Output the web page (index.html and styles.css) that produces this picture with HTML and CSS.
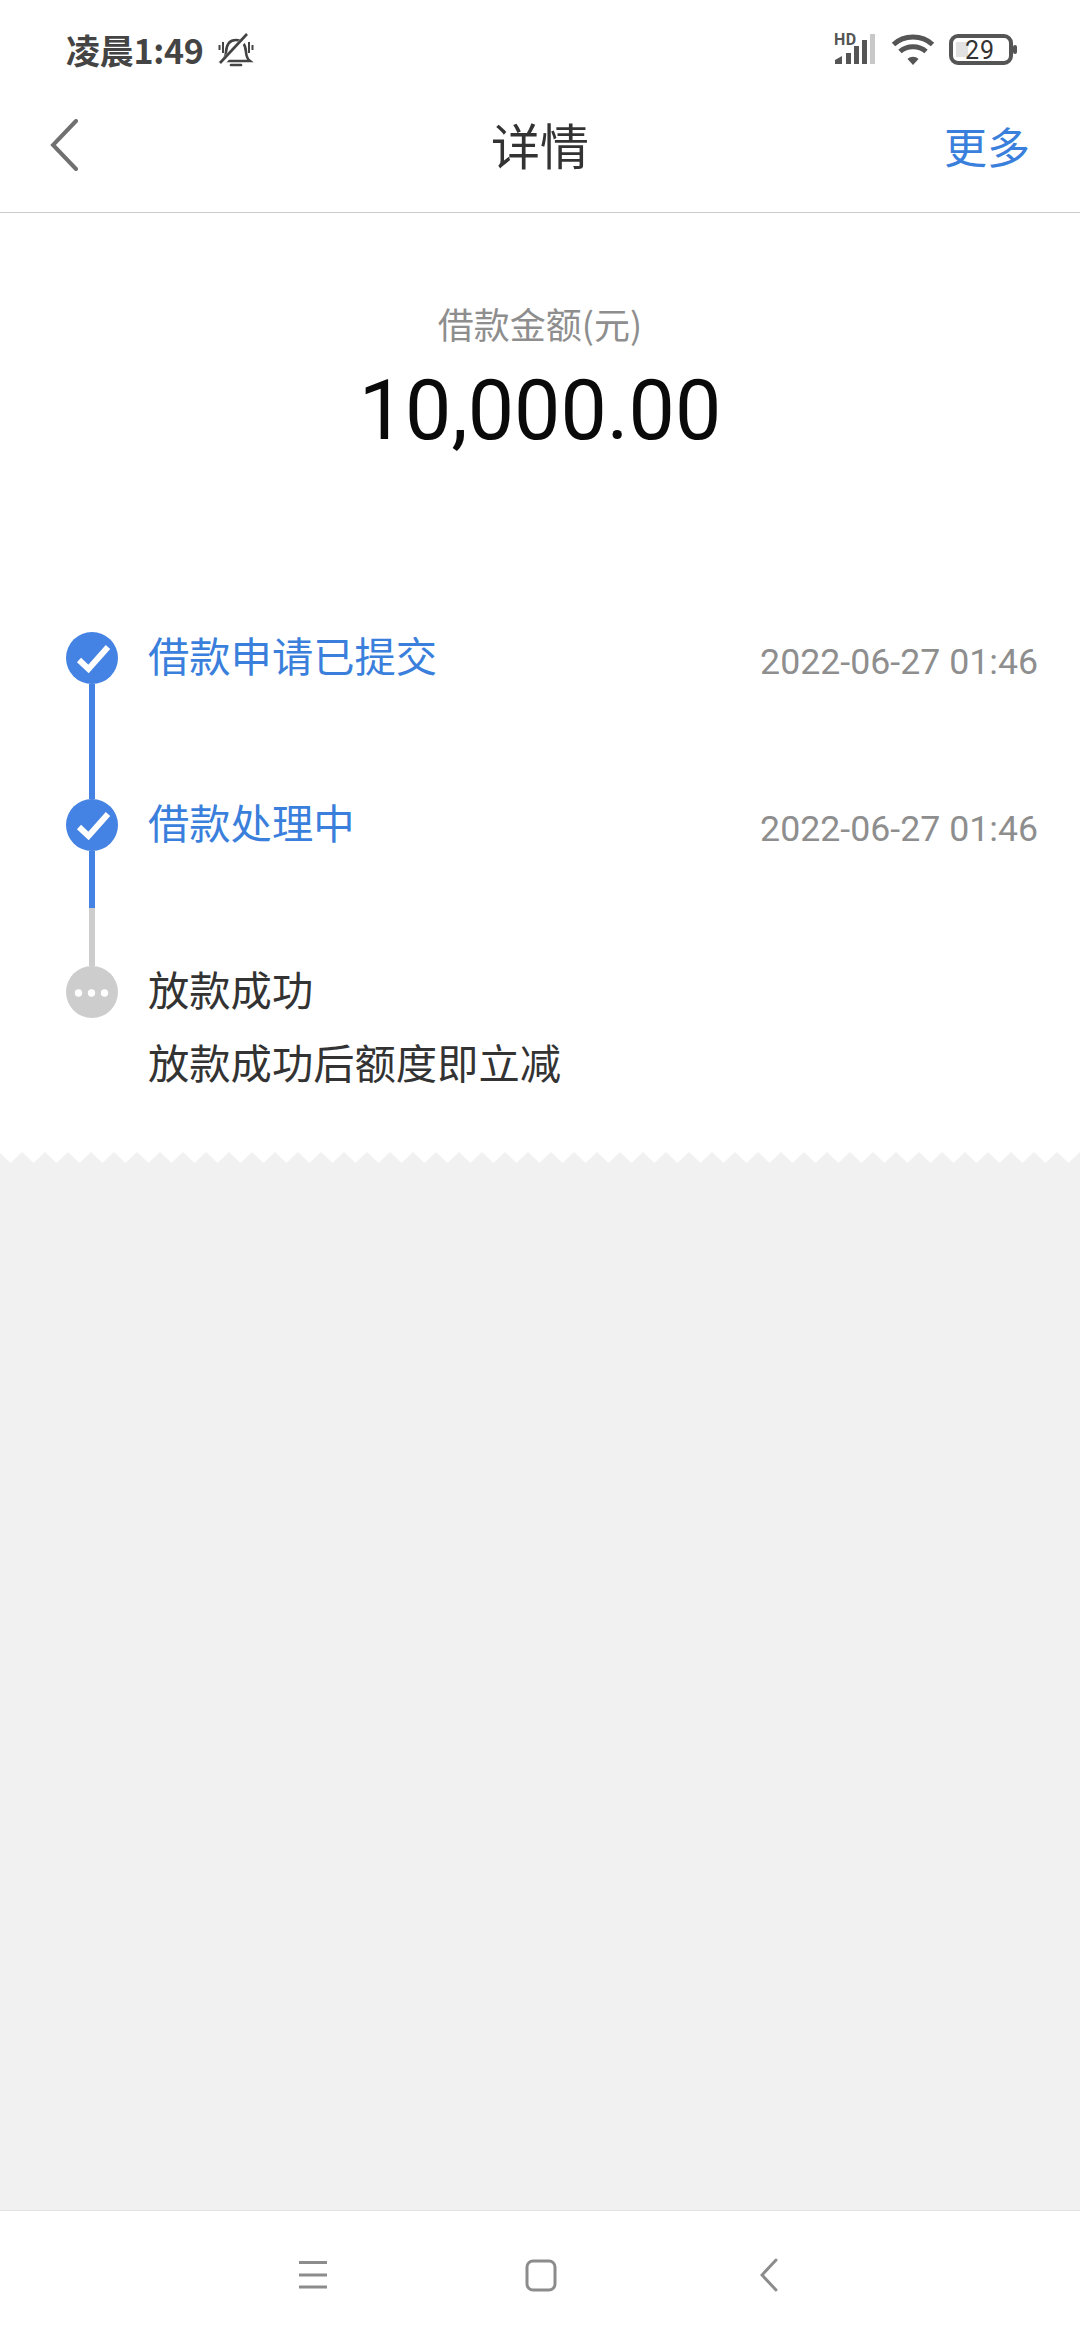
FILE: index.html
```html
<!DOCTYPE html>
<html lang="zh-CN">
<head>
<meta charset="utf-8">
<title>详情</title>
<link rel="stylesheet" href="styles.css">
</head>
<body>
<div class="screen">
  <div class="status-bar">
    <div class="status-left">
      <span class="clock">凌晨1:49</span>
      <svg class="bell" width="36" height="34" viewBox="0 0 36 34" fill="none" stroke="#444" stroke-width="2.6">
        <path d="M4 28h28c-2.500-2-3.700-4.500-4-9-.4-6-2.700-12-10-12s-9.600 6-10 12c-.3 4.500-1.500 7-4 9z"/>
        <path d="M3 31 L29 3" stroke="#fff" stroke-width="6"/>
        <path d="M2 30 L29 1"/>
        <path d="M13 32h10" stroke-linecap="round"/>
        <path d="M1.500 12v5M5 9v11M31 9v11M34.500 12v5" stroke-width="2"/>
      </svg>
    </div>
    <div class="status-right">
      <div class="signal">
        <span class="hd">HD</span>
        <svg width="42" height="31" viewBox="0 0 42 31">
          <path d="M1 30v-4l7-4v8z" fill="#555"/>
          <rect x="12" y="19" width="5" height="11" fill="#555"/>
          <rect x="20" y="12" width="5" height="18" fill="#555"/>
          <rect x="28" y="6" width="5" height="24" fill="#555"/>
          <rect x="36" y="0" width="5" height="30" fill="#c8c8c8"/>
        </svg>
      </div>
      <svg class="wifi" width="44" height="32" viewBox="0 0 44 32" fill="none" stroke="#555" stroke-width="5">
        <path d="M2.500 10.500C13 .5 31 .5 41.500 10.500"/>
        <path d="M9 17.500C16 11 28 11 35 17.500"/>
        <path d="M16.500 25L22 31l5.500-6c-3-3-8-3-11 0z" fill="#555" stroke="none"/>
      </svg>
      <svg class="battery" width="70" height="32" viewBox="0 0 70 32">
        <rect x="2" y="2" width="60" height="27" rx="7" fill="none" stroke="#555" stroke-width="4"/>
        <rect x="7" y="8" width="12" height="15" fill="#e2e2e2"/>
        <rect x="64" y="11" width="4" height="9" rx="2" fill="#555"/>
        <text class="battery-text" x="31" y="25" text-anchor="middle">29</text>
      </svg>
    </div>
  </div>

  <header class="nav-bar">
    <svg class="back" width="28" height="52" viewBox="0 0 28 52" fill="none" stroke="#707070" stroke-width="4" stroke-linecap="round" stroke-linejoin="miter">
      <path d="M26 2 L3 26 L26 50"/>
    </svg>
    <h1 class="title">详情</h1>
    <span class="more">更多</span>
  </header>

  <main class="content">
    <section class="summary">
      <div class="summary-label">借款金额(元)</div>
      <div class="summary-amount">10,000.00</div>
    </section>

    <section class="timeline">
      <div class="step">
        <div class="marker">
          <svg class="dot" width="52" height="52" viewBox="0 0 52 52"><circle cx="26" cy="26" r="26" fill="#4482e3"/><path d="M13 28l9.500 9L42 15" fill="none" stroke="#fff" stroke-width="6"/></svg>
          <div class="line line-blue"></div>
        </div>
        <div class="step-title is-done">借款申请已提交</div>
        <div class="step-time">2022-06-27 01:46</div>
      </div>
      <div class="step">
        <div class="marker">
          <svg class="dot" width="52" height="52" viewBox="0 0 52 52"><circle cx="26" cy="26" r="26" fill="#4482e3"/><path d="M13 28l9.500 9L42 15" fill="none" stroke="#fff" stroke-width="6"/></svg>
          <div class="line line-blue line-short"></div>
          <div class="line line-gray"></div>
        </div>
        <div class="step-title is-done">借款处理中</div>
        <div class="step-time">2022-06-27 01:46</div>
      </div>
      <div class="step step-last">
        <div class="marker">
          <svg class="dot" width="52" height="52" viewBox="0 0 52 52"><circle cx="26" cy="26" r="26" fill="#cdcdcd"/><circle cx="12.500" cy="27" r="3.700" fill="#fff"/><circle cx="25.500" cy="27" r="3.700" fill="#fff"/><circle cx="38.500" cy="27" r="3.700" fill="#fff"/></svg>
        </div>
        <div class="step-body">
          <div class="step-title">放款成功</div>
          <div class="step-note">放款成功后额度即立减</div>
        </div>
      </div>
    </section>
  </main>

  <svg class="zigzag" width="1080" height="11" viewBox="0 0 1080 11" preserveAspectRatio="none">
    <defs>
      <pattern id="teeth" width="23" height="11" patternUnits="userSpaceOnUse" patternTransform="translate(10.500 0)">
        <rect width="23" height="11" fill="#fff"/>
        <path d="M0 11L11.500 0 23 11z" fill="#f1f1f1"/>
      </pattern>
    </defs>
    <rect width="1080" height="11" fill="url(#teeth)"/>
  </svg>
  <div class="filler"></div>

  <footer class="system-nav">
    <svg class="sys-menu" width="30" height="30" viewBox="0 0 30 30" stroke="#8c8c8c" stroke-width="3">
      <path d="M1 2.500h28M1 15h28M1 27h28"/>
    </svg>
    <svg class="sys-home" width="32" height="33" viewBox="0 0 32 33" fill="none" stroke="#8c8c8c" stroke-width="3">
      <rect x="2" y="2" width="28" height="29" rx="6"/>
    </svg>
    <svg class="sys-back" width="18" height="34" viewBox="0 0 18 34" fill="none" stroke="#8c8c8c" stroke-width="3" stroke-linecap="round">
      <path d="M16 2L2 17l14 15"/>
    </svg>
  </footer>
</div>
</body>
</html>
```
FILE: styles.css
```css
* { box-sizing: border-box; margin: 0; padding: 0; }
html, body { width: 1080px; height: 2340px; background: #fff; overflow: hidden; }
body { font-family: "Noto Sans CJK SC", Roboto, sans-serif; }
.screen { width: 1080px; height: 2340px; display: flex; flex-direction: column; background: #f1f1f1; }

.status-bar { height: 68px; padding: 32px 61px 0 66px; display: flex; justify-content: space-between; align-items: flex-start; background: #fff; }
.status-left { display: flex; align-items: center; gap: 15px; height: 36px; }
.clock { font-family: "Noto Sans CJK SC", sans-serif; font-size: 34px; font-weight: 700; color: #444; line-height: 36px; letter-spacing: -0.3px; }
.bell { display: block; }
.status-right { display: flex; align-items: flex-start; margin-top: 2px; }
.signal { width: 42px; height: 31px; position: relative; margin-right: 15px; }
.signal svg { display: block; }
.hd { position: absolute; left: 0; top: -1px; font-family: Roboto, sans-serif; font-size: 16px; font-weight: 700; line-height: 14px; color: #555; letter-spacing: 0.5px; }
.wifi { display: block; margin-right: 14px; }
.battery { display: block; }
.battery-text { font-family: Roboto, sans-serif; font-size: 25px; fill: #333; letter-spacing: 1px; }

.nav-bar { height: 145px; background: #fff; border-bottom: 1px solid #ccc; display: flex; align-items: center; justify-content: space-between; padding: 9px 50px 0 50px; position: relative; }
.back { display: block; }
.title { position: absolute; left: 0; right: 0; top: 48px; text-align: center; font-size: 49px; font-weight: 400; line-height: 56px; color: #333; }
.more { font-size: 43px; line-height: 56px; color: #3a7fdc; }

.content { height: 939px; background: #fff; display: flex; flex-direction: column; }
.summary { padding-top: 85px; display: flex; flex-direction: column; align-items: center; }
.summary-label { font-size: 36px; line-height: 50px; color: #8e8e8e; }
.summary-amount { font-family: Roboto, sans-serif; font-size: 82.500px; line-height: 96px; color: #0a0a0a; margin-top: 15px; }

.timeline { margin-top: 173px; padding: 0 42px 0 66px; display: flex; flex-direction: column; }
.step { display: flex; height: 167px; align-items: flex-start; }
.step-last { height: auto; }
.marker { width: 52px; height: 100%; display: flex; flex-direction: column; align-items: center; flex: none; }
.dot { display: block; flex: none; }
.line { width: 6px; flex: 1; }
.line-blue { background: #4482e3; }
.line-short { flex: none; height: 57px; }
.line-gray { background: #cdcdcd; }
.step-title { margin-left: 30px; margin-top: -4px; font-size: 41.300px; line-height: 52px; color: #333; }
.step-title.is-done { color: #3a7fdc; }
.step-time { margin-left: auto; margin-top: 4px; font-family: Roboto, sans-serif; font-size: 35.700px; line-height: 52px; color: #8e8e8e; }
.step-note { margin-left: 30px; margin-top: 21px; font-size: 41.300px; line-height: 52px; color: #333; }

.zigzag { display: block; flex: none; }
.filler { flex: 1; background: #f1f1f1; }

.system-nav { height: 130px; flex: none; background: #fff; border-top: 1px solid #e2e2e2; display: flex; align-items: center; position: relative; padding-bottom: 1px; }
.sys-menu { display: block; margin-left: 298px; }
.sys-home { display: block; margin-left: 197px; }
.sys-back { display: block; margin-left: 203px; }
```
